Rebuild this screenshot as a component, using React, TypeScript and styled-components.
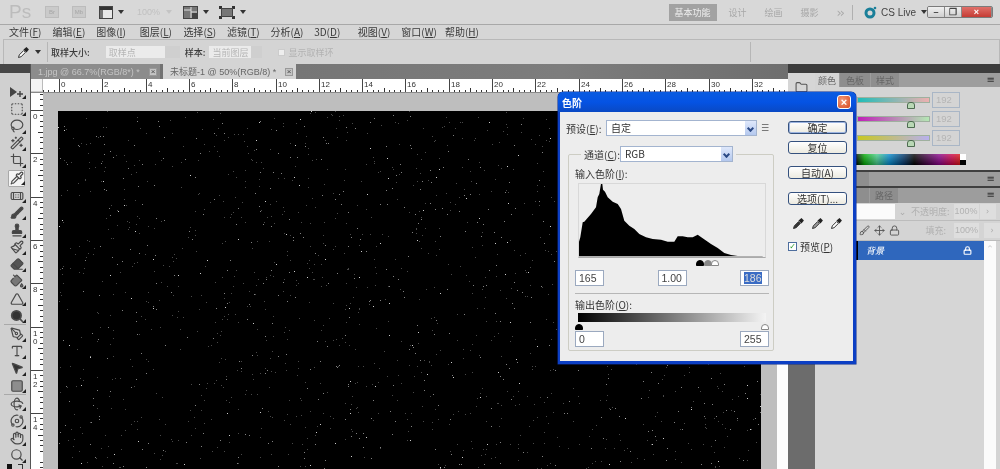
import React from "react";
import styled, { createGlobalStyle, css } from "styled-components";
import { SquareDashed, Lasso, Crop, Pipette, Bandage, Brush, Stamp, Eraser, PaintBucket, Triangle, PenTool, Type, MousePointer2, Square, Orbit, Rotate3d, Hand, Search, Paintbrush, Wand2, Lock, Move, Folder } from "lucide-react";

const Global = createGlobalStyle`
  html, body { margin: 0; padding: 0; background: #d6d6d6; }
  * { box-sizing: border-box; }
  body { font-family: "Liberation Sans", "Noto Sans CJK SC", sans-serif; font-size: 10px; color: #333; }
`;
const cjk = `"Noto Sans CJK SC", "Liberation Sans", sans-serif`;

const Stage = styled.div`position: relative; width: 1000px; height: 469px; overflow: hidden; display: flex; flex-direction: column; background: #d6d6d6; font-family: ${cjk}; filter: blur(0.35px);`;

/* ---------- app bar ---------- */
const AppBar = styled.div`height: 25px; flex: none; display: flex; align-items: center; border-bottom: 1px solid #a8a8a8; background: #d8d8d8; padding-left: 9px; position: relative;`;
const PsLogo = styled.span`font: 19px "Liberation Sans", sans-serif; color: #bcbcbc; width: 36px;`;
const BridgeBox = styled.span`width: 14px; height: 12px; margin-right: 13px; border: 1px solid #bcbcbc; background: #cacaca; color: #a6a6a6; font: 6px/10px "Liberation Sans", sans-serif; text-align: center;`;
const Caret = styled.span<{ $color?: string }>`width: 0; height: 0; border: 3px solid transparent; border-top: 4px solid ${p => p.$color || "#333"}; border-bottom: 0; margin-left: 5px;`;
const ZoomText = styled.span`color: #c0c0c0; font: 9px "Liberation Sans", sans-serif; margin: 0 2px 0 13px; width: 22px;`;
const BarGap = styled.span<{ $w: number }>`width: ${p => p.$w}px; flex: none;`;
const BarSpacer = styled.div`flex: 1;`;
const Workspace = styled.span<{ $on?: boolean }>`
  color: #a8a8a8; font-size: 9px; margin-right: 18px; white-space: nowrap;
  ${p => p.$on && css`background: #a2a2a2; color: #eee; height: 17px; line-height: 17px; margin-right: 12px; width: 48px; text-align: center;`}
`;
const Chevrons = styled.span`color: #aaa; font: 13px "DejaVu Sans", sans-serif; margin-right: 9px; letter-spacing: -2px;`;
const VSep = styled.span`width: 1px; height: 15px; background: #b0b0b0; margin-right: 11px;`;
const LiveText = styled.span`font: 10px "Liberation Sans", sans-serif; color: #444; margin-left: 4px; display: flex; align-items: center;`;
const WinGroup = styled.div`display: flex; margin: 0 7px 0 0; height: 12px; border: 1px solid #7b7b7b; border-radius: 2px; overflow: hidden;`;
const WinBtn = styled.span<{ $w: number; $close?: boolean }>`
  width: ${p => p.$w}px; display: flex; align-items: center; justify-content: center; font: bold 9px "Liberation Sans", sans-serif; color: ${p => (p.$close ? "#fff" : "#444")};
  background: ${p => (p.$close ? "linear-gradient(#e0706a,#c53c34)" : "linear-gradient(#f0f0f0,#cfcfcf)")};
  border-right: 1px solid #8a8a8a;
`;

/* ---------- menu ---------- */
const MenuBar = styled.div`height: 14px; flex: none; display: flex; align-items: center; padding-left: 9px; background: #d6d6d6; gap: 12px;`;
const MenuItem = styled.span`font-size: 10px; line-height: 14px; color: #3a3a3a; width: 31.6px; white-space: nowrap; u { text-decoration: underline; }`;

/* ---------- options ---------- */
const Options = styled.div`height: 25px; flex: none; display: flex; align-items: center; margin-left: 3px; border: 1px solid #b8b8b8; border-bottom: 0; padding-left: 13px; background: #d4d4d4; font-size: 9px;`;
const OptLabel = styled.span<{ $mr: number; $muted?: boolean }>`margin-right: ${p => p.$mr}px; color: ${p => (p.$muted ? "#b2b2b2" : "#3a3a3a")}; white-space: nowrap; font-weight: ${p => (p.$muted ? 400 : 500)};`;
const OptSelect = styled.span<{ $w: number; $mr: number }>`
  width: ${p => p.$w}px; margin-right: ${p => p.$mr}px; height: 12px; display: flex; align-items: center; background: linear-gradient(90deg,#ebebeb 80%,#cfcfcf 80%); color: #b5b5b5; padding-left: 3px; white-space: nowrap; font-size: 9px;
`;
const OptSep = styled.span<{ $ml: number; $mr: number }>`width: 1px; height: 20px; background: #b6b6b6; margin: 0 ${p => p.$mr}px 0 ${p => p.$ml}px;`;
const OptCheck = styled.span`width: 7px; height: 7px; background: #eee; border: 1px solid #ccc; margin-right: 3px;`;
const OptRest = styled.div`flex: 1;`;

/* ---------- workspace ---------- */
const Main = styled.div`flex: 1; min-height: 0; display: flex;`;
const Toolbox = styled.div`width: 31px; flex: none; background: #d0d0d0; border-right: 1px solid #555; display: flex; flex-direction: column; overflow: hidden;`;
const ToolHead = styled.div`height: 9px; flex: none; background: #474747;`;
const ToolGrip = styled.div`height: 10px; flex: none;`;
const ToolBtn = styled.div<{ $on?: boolean }>`
  position: relative; height: 17.2px; flex: none; display: flex; align-items: center; justify-content: center; margin: 0 5px 0 8px; color: #4a4a4a;
  ${p => p.$on && css`background: #f4f4f4; border: 1px solid #a8a8a8; border-radius: 1px; margin-top: 1px; height: 17px;`}
  &::after { content: ""; position: absolute; right: -1px; bottom: 1px; border: 2px solid transparent; border-right-color: #222; border-bottom-color: #222; }
`;
const ToolSep = styled.div`height: 1px; flex: none; margin: 0 4px; background: #a9a9a9;`;
const Swatches = styled.div`display: flex; gap: 6px; margin: 0 0 0 7px; flex: none;`;
const FgSwatch = styled.span`width: 5px; height: 5px; background: #111;`;
const SwapIcon = styled.span`width: 5px; height: 5px; border-top: 1px solid #333; border-right: 1px solid #333;`;

const Doc = styled.div`flex: 1; min-width: 0; display: flex; flex-direction: column;`;
const TabRow = styled.div`height: 15px; flex: none; display: flex; background: linear-gradient(90deg,#6f6f6f,#7d7d7d 70%,#6e6e6e); gap: 3px;`;
const DocTab = styled.div<{ $on?: boolean; $w: number }>`
  width: ${p => p.$w}px; display: flex; align-items: center; justify-content: space-between; padding: 0 3px 0 7px; white-space: nowrap; font: 9px "Liberation Sans","Noto Sans CJK SC",sans-serif;
  background: ${p => (p.$on ? "#d4d4d4" : "#8c8c8c")}; color: ${p => (p.$on ? "#666" : "#c4c4c4")};
`;
const TabClose = styled.span`width: 8px; height: 8px; border: 1px solid #999; background: #c4c4c4; color: #444; font: 8px/6px "Liberation Sans",sans-serif; text-align: center;`;
const RulerRow = styled.div`height: 14px; flex: none; display: flex; background: #fff; border-bottom: 1px solid #8a8a8a; overflow: hidden;`;
const RulerCorner = styled.div`width: 12px; flex: none; border-right: 1px solid #bbb; border-bottom: 1px solid #ccc; background: #f4f4f4;`;
const DocBody = styled.div`flex: 1; min-height: 0; display: flex;`;
const VRuler = styled.div`width: 12px; flex: none; background: #fff; overflow: hidden;`;
const Pasteboard = styled.div`flex: 1; min-width: 0; background: #bebebe; padding: 18px 16px 0 15px; display: flex;`;
const Canvas = styled.svg`flex: 1; min-width: 0; height: 358px; display: block; background: #000;`;
const DocScroll = styled.div`width: 11px; flex: none; background: #fdfdfd;`;

/* ---------- panels ---------- */
const Panels = styled.div`width: 212px; flex: none; display: flex; flex-direction: column;`;
const PanelHead = styled.div`height: 9px; flex: none; background: #3c3c3c;`;
const PanelBody = styled.div`flex: 1; min-height: 0; display: flex;`;
const Dock = styled.div`width: 27px; flex: none; display: flex; flex-direction: column;`;
const DockTop = styled.div`height: 115px; flex: none; background: #d6d6d6; display: flex; justify-content: center; padding-top: 8px; color: #555; border-bottom: 2px solid #3c3c3c;`;
const DockBottom = styled.div`flex: 1; background: #6c6c6c;`;
const PanelCol = styled.div`width: 185px; flex: none; display: flex; flex-direction: column; background: #d4d4d4;`;
const PanelTabs = styled.div<{ $h: number }>`
  height: ${p => p.$h}px; flex: none; display: flex; align-items: stretch; position: relative; background: #9d9d9d; color: #777; font-size: 9px;
  &::after { content: "≡"; position: absolute; right: 5px; top: 0; font: 10px/14px "DejaVu Sans",sans-serif; color: #333; }
`;
const PanelTab = styled.span<{ $w: number; $on?: boolean }>`width: ${p => p.$w}px; display: flex; align-items: center; justify-content: center; color: #666; background: ${p => (p.$on ? "#d4d4d4" : "#8e8e8e")}; margin-right: 1px;`;
const ColorBody = styled.div`height: 83px; flex: none; padding: 5px 0 0 43px; display: flex; flex-direction: column; gap: 3px;`;
const SliderRow = styled.div`height: 16px; display: flex; align-items: center; gap: 3px;`;
const SliderTrack = styled.div<{ $a: string; $b: string }>`position: relative; width: 71px; height: 4px; background: linear-gradient(90deg,${p => p.$a},${p => p.$b}); outline: 1px solid #9fb09f;
  &::after { content: ""; position: absolute; left: 49px; top: 4px; width: 6px; height: 5px; border-radius: 3px 3px 0 0; background: #b9d8b5; border: 1px solid #4d6b50; }
`;
const ColorBox = styled.span`width: 28px; height: 16px; border: 1px solid #a9b6c6; color: #b5b5b5; font: 9.5px/14px "Liberation Sans",sans-serif; padding-left: 3px;`;
const SpectrumRow = styled.div`display: flex; margin: 5px 0 0 -2px; height: 11px;`;
const Spectrum = styled.div`width: 104px; background: linear-gradient(rgba(255,255,255,.22),rgba(0,0,0,.3)), linear-gradient(90deg,#000,#0a0 8%,#4c8 20%,#08c 32%,#036 46%,#000 56%,#808 80%,#c04 92%,#d11);`;
const MonoSwatch = styled.div`width: 6px; background: linear-gradient(#fff 50%,#000 50%);`;
const DarkRule = styled.div`height: 2px; flex: none; background: #3f3f3f;`;
const LayerTop = styled.div`height: 18px; flex: none; display: flex; align-items: center; border-bottom: 1px solid #bcbcbc; color: #b0b0b0; font-size: 9px; white-space: nowrap;`;
const BlendBox = styled.span`width: 80px; height: 15px; background: #fbfbfb; flex: none;`;
const BlendArrow = styled.span`width: 15px; text-align: center; color: #aaa; font: 9px "DejaVu Sans",sans-serif; flex: none; margin-right: 1px;`;
const PercentBox = styled.span`width: 25px; height: 15px; background: #dedede; color: #b2b2b2; font: 9px/15px "Liberation Sans",sans-serif; text-align: center; margin: 0 1px 0 4px; flex: none;`;
const ArrowBox = styled.span`width: 16px; height: 15px; background: #dedede; color: #aaa; font: 8px/15px "DejaVu Sans",sans-serif; text-align: center; flex: none;`;
const LayerLock = styled.div`height: 20px; flex: none; display: flex; align-items: center; padding-left: 44px; color: #555; gap: 4px; font-size: 9px; border-bottom: 1px solid #bcbcbc; white-space: nowrap;`;
const FillLabel = styled.span`margin-left: auto; color: #b0b0b0;`;
const LayerList = styled.div`flex: 1; min-height: 0; display: flex;`;
const LayerItems = styled.div`flex: 1; background: #d6d6d6;`;
const LayerRow = styled.div`height: 19px; background: #2f67bd; color: #fff; display: flex; align-items: center; justify-content: space-between; padding: 0 12px 0 10px; margin-left: 41px; font-size: 9px; font-style: italic; position: relative;
  &::before { content: ""; position: absolute; left: 0; top: 0; bottom: 0; width: 2px; background: #000; }
`;
const ListScroll = styled.div`width: 12px; flex: none; background: #fbfbfb; color: #ccc; text-align: center; font: 9px/16px "DejaVu Sans",sans-serif;`;
const PanelEnd = styled.div`width: 4px; flex: none; background: #d4d4d4;`;

/* ---------- dialog ---------- */
const Dialog = styled.div`position: absolute; left: 558px; top: 92px; width: 298px; height: 272px; border: 2px solid #0c3fc4; border-width: 0 3px 3px 2px; border-radius: 5px 5px 0 0; background: #ededed; display: flex; flex-direction: column; box-shadow: 0 0 0 .5px #0a2a90;`;
const TitleBar = styled.div`height: 20px; flex: none; margin: 0 -3px 0 -2px; background: linear-gradient(#0a5be0,#0553e4 50%,#0a49c4); border-radius: 5px 5px 0 0; color: #fff; font-size: 10px; font-weight: 700; display: flex; align-items: center; justify-content: space-between; padding: 0 5px 0 4px;`;
const CloseX = styled.span`width: 14px; height: 14px; background: radial-gradient(circle at 35% 35%,#f09a7a,#d94a20); border: 1px solid #fff; border-radius: 3px; color: #fff; font: bold 11px/12px "Liberation Sans",sans-serif; text-align: center;`;
const DlgBody = styled.div`flex: 1; display: flex;`;
const DlgLeft = styled.div`width: 215px; flex: none; padding: 8px 0 0 6px;`;
const DlgRight = styled.div`flex: 1; padding-top: 9px; padding-left: 13px; display: flex; flex-direction: column; align-items: flex-start;`;
const PresetRow = styled.div`display: flex; align-items: center; height: 16px; font-size: 10px; color: #333; white-space: nowrap; u { text-decoration: underline; }`;
const PresetLabel = styled.span`width: 34px; flex: none;`;
const Combo = styled.span<{ $w: number; $ml: number }>`
  position: relative; width: ${p => p.$w}px; margin-left: ${p => p.$ml}px; height: 16px; background: #fff; border: 1px solid #a3b4cf; font-size: 10px; line-height: 14px; padding-left: 4px; color: #333; flex: none;
  &::after { content: ""; position: absolute; right: 0; top: 0; bottom: 0; width: 11px; background: linear-gradient(#dfe8fb,#b4c8ee); }
  &::before { content: ""; position: absolute; z-index: 1; right: 3px; top: 5px; width: 3px; height: 3px; border-right: 2px solid #2c4a86; border-bottom: 2px solid #2c4a86; transform: rotate(45deg); }
`;
const PresetMenu = styled.span`margin-left: 4px; width: 13px; color: #555; font: 9px "DejaVu Sans",sans-serif;`;
const GroupBox = styled.fieldset`margin: 10px 0 0 2px; padding: 0 4px 0 6px; width: 206px; height: 205px; border: 1px solid #cdcdc4; border-radius: 2px;`;
const GroupLegend = styled.legend`margin-left: 6px; padding: 0 3px; display: flex; align-items: center; height: 16px; font-size: 10px; white-space: nowrap; u { text-decoration: underline; }`;
const SectionLabel = styled.div<{ $mt: number }>`margin-top: ${p => p.$mt}px; height: 15px; line-height: 15px; font-size: 10px; color: #333; u { text-decoration: underline; }`;
const HistoFrame = styled.div`margin: 2px 0 0 3px; width: 188px; height: 75px; border: 1px solid #d8d8d8; border-bottom-color: #aaa; display: block;`;
const SliderLane = styled.div<{ $h: number }>`position: relative; margin-left: 3px; width: 188px; height: ${p => p.$h}px;`;
const Thumb = styled.span<{ $x: number; $c: string }>`position: absolute; left: ${p => p.$x}px; top: 2px; width: 8px; height: 6px; background: ${p => p.$c}; border: 1px solid ${p => (p.$c === "#fff" ? "#888" : p.$c)}; border-radius: 4px 4px 0 0;`;
const FieldRow = styled.div`display: flex; justify-content: space-between; width: 194px;`;
const LevelField = styled.span<{ $sel?: boolean }>`
  width: 29px; height: 16px; background: #fff; border: 1px solid #9ba9bf; font: 10.5px/14px "Liberation Sans",sans-serif; padding-left: 3px; color: #444;
  span { ${p => p.$sel && css`background: #3a6cc4; color: #ddd;`} }
`;
const Rule = styled.div`height: 1px; width: 194px; margin-top: 7px; background: #b6b6b6;`;
const OutGradient = styled.div`margin: 1px 0 0 3px; width: 188px; height: 9px; background: linear-gradient(90deg,#000,#f4f4f4); `;
const DlgButton = styled.button<{ $mt: number; $primary?: boolean }>`
  width: 59px; height: 13px; margin-top: ${p => p.$mt}px; padding: 0; font: 10px/11px ${cjk}; color: #333; background: linear-gradient(#fff,#eceae0); border: 1px solid #35517e; border-radius: 3px; flex: none; white-space: nowrap;
  ${p => p.$primary && css`box-shadow: inset 0 0 0 1px #9cb4e0;`}
  u { text-decoration: underline; }
`;
const DropRow = styled.div`display: flex; gap: 6px; margin: 12px 0 0 4px; color: #333;`;
const CheckRow = styled.div`display: flex; align-items: center; margin-top: 9px; font-size: 10px; gap: 3px; white-space: nowrap; u { text-decoration: underline; }`;
const Check = styled.span`width: 9px; height: 9px; background: #fff; border: 1px solid #4e6e9e; color: #2a9a2a; font: bold 8px/7px "DejaVu Sans",sans-serif; text-align: center;`;

function Stars() {
  const build = (n: number, seed: number) => {
    let s = seed;
    const r = () => { s = (s * 16807) % 2147483647; return s / 2147483647; };
    let d = "";
    for (let i = 0; i < n; i++) d += `M${Math.floor(r() * 703)} ${Math.floor(r() * 358)}h1v1h-1z`;
    return d;
  };
  return (
    <Canvas viewBox="0 0 703 358">
      <path d={build(1200, 12345)} fill="#484848" />
      <path d={build(500, 9871)} fill="#808080" />
      <path d={build(120, 4242)} fill="#cccccc" />
    </Canvas>
  );
}

function HRuler() {
  const x0 = 16;
  const ticks: React.ReactNode[] = [];
  for (let i = -6; i < 140; i++) {
    const x = x0 + i * 5.41;
    if (i % 8 === 0) continue;
    ticks.push(<rect key={i} x={Math.round(x)} y={i % 4 === 0 ? 9 : 11} width={1} height={i % 4 === 0 ? 5 : 3} fill="#333" />);
  }
  const labels = [];
  for (let k = 0; k <= 16; k++) {
    const x = Math.round(x0 + k * 43.3);
    labels.push(
      <g key={k}>
        <rect x={x} y={0} width={1} height={14} fill="#444" />
        <text x={x + 2} y={8} fontSize={8} fontFamily="Liberation Sans" fill="#333">{k * 2}</text>
      </g>
    );
  }
  return <svg width={745} height={14} style={{ display: "block" }}>{ticks}{labels}</svg>;
}

function VRulerArt() {
  const y0 = 17;
  const ticks: React.ReactNode[] = [];
  for (let i = -3; i < 70; i++) {
    if (i % 8 === 0) continue;
    const y = y0 + i * 5.41;
    ticks.push(<rect key={i} y={Math.round(y)} x={i % 4 === 0 ? 7 : 9} height={1} width={i % 4 === 0 ? 5 : 3} fill="#333" />);
  }
  const labels = [];
  for (let k = 0; k <= 7; k++) {
    const y = Math.round(y0 + k * 43.3);
    const digits = String(k * 2).split("");
    labels.push(
      <g key={k}>
        <rect y={y} x={0} height={1} width={12} fill="#444" />
        {digits.map((d, i) => (
          <text key={i} x={2} y={y + 9 + i * 8} fontSize={8} fontFamily="Liberation Sans" fill="#333">{d}</text>
        ))}
      </g>
    );
  }
  return <svg width={12} height={376} style={{ display: "block" }}>{ticks}{labels}</svg>;
}

const MoveTool = () => (
  <svg width="16" height="14" viewBox="0 0 16 14"><path d="M1 2l7 5-7 5z" fill="#444" /><path d="M11 6v6M8 9h6" stroke="#444" strokeWidth="1.4" /></svg>
);

const Dropper = ({ tip = "#fff" }: { tip?: string }) => (
  <svg width="13" height="13" viewBox="0 0 13 13">
    <path d="M1.5 11.5l.8-2.6 4.4-4.4 1.8 1.8-4.4 4.4z" fill={tip} stroke="#333" />
    <path d="M6.5 3.4l3-2.4 2.4 2.4-2.4 3z" fill="#222" />
  </svg>
);

const DocIcon = () => (
  <svg width="14" height="13" viewBox="0 0 14 13"><rect x=".5" y=".5" width="13" height="12" fill="#e8e8e8" stroke="#444" /><rect x="1" y="1" width="12" height="3" fill="#333" /><rect x="1" y="4" width="3" height="8" fill="#777" /></svg>
);
const LayoutIcon = () => (
  <svg width="15" height="13" viewBox="0 0 15 13"><rect x=".5" y=".5" width="14" height="12" fill="#777" stroke="#444" /><path d="M8 1v11M8 6h6M1 4h7" stroke="#e0e0e0" /><rect x="9" y="7" width="5" height="5" fill="#444" /></svg>
);
const ScreenIcon = () => (
  <svg width="16" height="13" viewBox="0 0 16 13"><rect x="2.5" y="2.5" width="11" height="8" fill="#777" stroke="#444" /><path d="M0 0h3v2H2v1H0zM13 0h3v3h-2V2h-1zM0 10h2v1h1v2H0zM14 10h2v3h-3v-2h1z" fill="#333" /></svg>
);

const Histo = () => {
  // traced from the reference histogram, at 3x
  const raw: [number, number][] = [[22,232],[22,195],[28,175],[35,130],[40,128],[45,122],[60,105],[75,85],[80,55],[85,45],[90,14],[94,14],[96,32],[102,38],[110,55],[125,68],[140,75],[150,90],[160,125],[175,140],[190,150],[205,165],[225,175],[245,180],[270,182],[290,188],[310,188],[320,172],[335,172],[350,175],[365,175],[380,167],[395,178],[420,195],[440,207],[460,222],[480,228],[500,231],[575,231],[575,232]];
  const pts = raw.map(([X, Y]) => `${(X / 3 - 8).toFixed(1)},${(Y / 3 - 5).toFixed(1)}`).join(" ");
  return (
    <HistoFrame>
      <svg width="186" height="74" style={{ display: "block" }}>
        <polygon points={pts} fill="#000" />
      </svg>
    </HistoFrame>
  );
};

const menus: [string, string][] = [["文件","F"],["编辑","E"],["图像","I"],["图层","L"],["选择","S"],["滤镜","T"],["分析","A"],["3D","D"],["视图","V"],["窗口","W"],["帮助","H"]];
const I = { size: 14, strokeWidth: 2 };

export default function App() {
  return (
    <Stage>
      <Global />
      <AppBar>
        <PsLogo>Ps</PsLogo>
        <BridgeBox>Br</BridgeBox>
        <BridgeBox>Mb</BridgeBox>
        <DocIcon /><Caret />
        <ZoomText>100%</ZoomText><Caret $color="#c4c4c4" />
        <BarGap $w={11} />
        <LayoutIcon /><Caret />
        <BarGap $w={10} />
        <ScreenIcon /><Caret />
        <BarSpacer />
        <Workspace $on>基本功能</Workspace>
        <Workspace>设计</Workspace>
        <Workspace>绘画</Workspace>
        <Workspace>摄影</Workspace>
        <Chevrons>››</Chevrons>
        <VSep />
        <svg width="13" height="13" viewBox="0 0 13 13"><circle cx="6" cy="7" r="4" fill="none" stroke="#1a7f99" strokeWidth="3" /><circle cx="11" cy="2" r="1.3" fill="#1a7f99" /></svg>
        <LiveText>CS Live<Caret /></LiveText>
        <WinGroup>
          <WinBtn $w={17}>–</WinBtn>
          <WinBtn $w={17}>❐</WinBtn>
          <WinBtn $w={30} $close>×</WinBtn>
        </WinGroup>
      </AppBar>
      <MenuBar>
        {menus.map(([a, b]) => <MenuItem key={b}>{a}(<u>{b}</u>)</MenuItem>)}
      </MenuBar>
      <Options>
        <Dropper /><Caret />
        <OptSep $ml={6} $mr={3} />
        <OptLabel $mr={16}>取样大小:</OptLabel>
        <OptSelect $w={74} $mr={5}>取样点</OptSelect>
        <OptLabel $mr={4}>样本:</OptLabel>
        <OptSelect $w={53} $mr={16}>当前图层</OptSelect>
        <OptCheck />
        <OptLabel $mr={0} $muted>显示取样环</OptLabel>
        <OptSep $ml={417} $mr={0} />
        <OptRest />
      </Options>
      <Main>
        <Toolbox>
          <ToolHead />
          <ToolGrip />
          <ToolBtn><MoveTool /></ToolBtn>
          <ToolBtn><SquareDashed {...I} /></ToolBtn>
          <ToolBtn><Lasso {...I} /></ToolBtn>
          <ToolBtn><Wand2 {...I} /></ToolBtn>
          <ToolBtn><Crop {...I} /></ToolBtn>
          <ToolBtn $on><Pipette {...I} /></ToolBtn>
          <ToolBtn><Bandage {...I} /></ToolBtn>
          <ToolBtn><Brush {...I} fill="#444" /></ToolBtn>
          <ToolBtn><Stamp {...I} fill="#444" /></ToolBtn>
          <ToolBtn><Paintbrush {...I} /></ToolBtn>
          <ToolBtn><Eraser {...I} fill="#555" /></ToolBtn>
          <ToolBtn><PaintBucket {...I} fill="#777" /></ToolBtn>
          <ToolBtn><Triangle {...I} /></ToolBtn>
          <ToolBtn><Search {...I} fill="#333" strokeWidth={3} /></ToolBtn>
          <ToolSep />
          <ToolBtn><PenTool {...I} /></ToolBtn>
          <ToolBtn><Type {...I} /></ToolBtn>
          <ToolBtn><MousePointer2 {...I} fill="#333" /></ToolBtn>
          <ToolBtn><Square {...I} fill="#8d8d8d" /></ToolBtn>
          <ToolSep />
          <ToolBtn><Rotate3d {...I} /></ToolBtn>
          <ToolBtn><Orbit {...I} /></ToolBtn>
          <ToolBtn><Hand {...I} /></ToolBtn>
          <ToolBtn><Search {...I} /></ToolBtn>
          <Swatches><FgSwatch /><SwapIcon /></Swatches>
        </Toolbox>
        <Doc>
          <TabRow>
            <DocTab $w={129}>1.jpg @ 66.7%(RGB/8*) *<TabClose>×</TabClose></DocTab>
            <DocTab $w={133} $on>未标题-1 @ 50%(RGB/8) *<TabClose>×</TabClose></DocTab>
          </TabRow>
          <RulerRow><RulerCorner /><HRuler /></RulerRow>
          <DocBody>
            <VRuler><VRulerArt /></VRuler>
            <Pasteboard><Stars /></Pasteboard>
            <DocScroll />
          </DocBody>
        </Doc>
        <Panels>
          <PanelHead />
          <PanelBody>
            <Dock>
              <DockTop><Folder size={13} /></DockTop>
              <DockBottom />
            </Dock>
            <PanelCol>
              <PanelTabs $h={14}>
                <PanelTab $w={24} $on>颜色</PanelTab>
                <PanelTab $w={30}>色板</PanelTab>
                <PanelTab $w={28}>样式</PanelTab>
              </PanelTabs>
              <ColorBody>
                <SliderRow><SliderTrack $a="#1fbdb8" $b="#eeb0b0" /><ColorBox>192</ColorBox></SliderRow>
                <SliderRow><SliderTrack $a="#c01fb8" $b="#b4e8b4" /><ColorBox>192</ColorBox></SliderRow>
                <SliderRow><SliderTrack $a="#c8c820" $b="#b8b0ee" /><ColorBox>192</ColorBox></SliderRow>
                <SpectrumRow><Spectrum /><MonoSwatch /></SpectrumRow>
              </ColorBody>
              <DarkRule />
              <PanelTabs $h={14}><PanelTab $w={54}>调整</PanelTab></PanelTabs>
              <DarkRule />
              <PanelTabs $h={15}>
                <PanelTab $w={54}>通道</PanelTab>
                <PanelTab $w={28}>路径</PanelTab>
              </PanelTabs>
              <LayerTop>
                <BlendBox />
                <BlendArrow>⌄</BlendArrow>
                <span>不透明度:</span>
                <PercentBox>100%</PercentBox>
                <ArrowBox>›</ArrowBox>
              </LayerTop>
              <LayerLock>
                <Brush size={11} />
                <Move size={11} />
                <Lock size={11} />
                <FillLabel>填充:</FillLabel>
                <PercentBox>100%</PercentBox>
                <ArrowBox>›</ArrowBox>
              </LayerLock>
              <LayerList>
                <LayerItems>
                  <LayerRow>背景<Lock size={9} strokeWidth={3} /></LayerRow>
                </LayerItems>
                <ListScroll>⌃</ListScroll>
                <PanelEnd />
              </LayerList>
            </PanelCol>
          </PanelBody>
        </Panels>
      </Main>

      <Dialog>
        <TitleBar>色阶<CloseX>×</CloseX></TitleBar>
        <DlgBody>
          <DlgLeft>
            <PresetRow>
              <PresetLabel>预设(<u>E</u>):</PresetLabel>
              <Combo $w={151} $ml={6}>自定</Combo>
              <PresetMenu>☰</PresetMenu>
            </PresetRow>
            <GroupBox>
              <GroupLegend>
                <span>通道(<u>C</u>):</span>
                <Combo $w={113} $ml={0}>RGB</Combo>
              </GroupLegend>
              <SectionLabel $mt={4}>输入色阶(<u>I</u>):</SectionLabel>
              <Histo />
              <SliderLane $h={12}>
                <Thumb $x={118} $c="#000" />
                <Thumb $x={126} $c="#888" />
                <Thumb $x={133} $c="#fff" />
              </SliderLane>
              <FieldRow>
                <LevelField>165</LevelField>
                <LevelField>1.00</LevelField>
                <LevelField $sel><span>186</span></LevelField>
              </FieldRow>
              <Rule />
              <SectionLabel $mt={3}>输出色阶(<u>O</u>):</SectionLabel>
              <OutGradient />
              <SliderLane $h={9}>
                <Thumb $x={-3} $c="#000" />
                <Thumb $x={183} $c="#fff" />
              </SliderLane>
              <FieldRow>
                <LevelField>0</LevelField>
                <LevelField>255</LevelField>
              </FieldRow>
            </GroupBox>
          </DlgLeft>
          <DlgRight>
            <DlgButton $mt={0} $primary>确定</DlgButton>
            <DlgButton $mt={7}>复位</DlgButton>
            <DlgButton $mt={12}>自动(<u>A</u>)</DlgButton>
            <DlgButton $mt={13}>选项(<u>T</u>)...</DlgButton>
            <DropRow><Dropper tip="#333" /><Dropper tip="#999" /><Dropper tip="#fff" /></DropRow>
            <CheckRow><Check>✓</Check><span>预览(<u>P</u>)</span></CheckRow>
          </DlgRight>
        </DlgBody>
      </Dialog>
    </Stage>
  );
}
